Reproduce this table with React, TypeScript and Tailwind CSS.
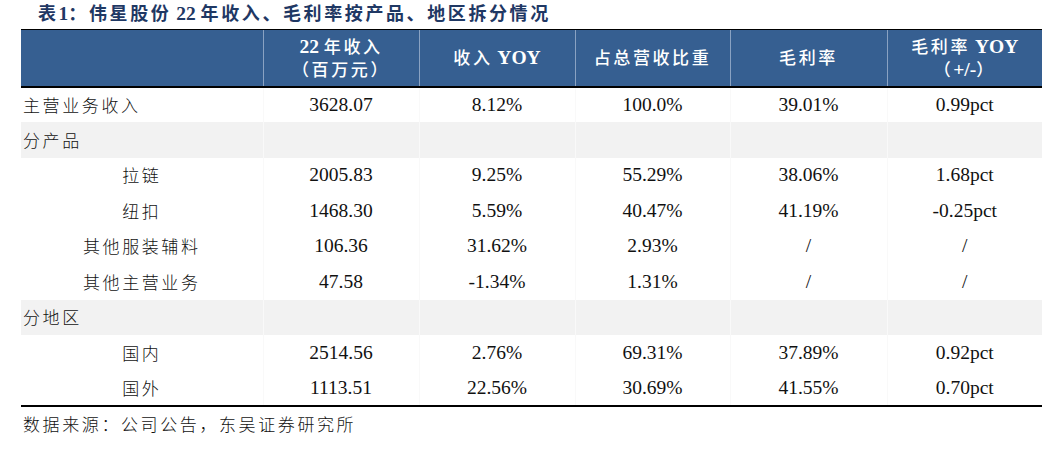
import React from 'react';

type Row = {
  label: string;
  kind: 'main' | 'group' | 'sub';
  vals?: string[];
};

const rows: Row[] = [
  { label: '主营业务收入', kind: 'main', vals: ['3628.07', '8.12%', '100.0%', '39.01%', '0.99pct'] },
  { label: '分产品', kind: 'group' },
  { label: '拉链', kind: 'sub', vals: ['2005.83', '9.25%', '55.29%', '38.06%', '1.68pct'] },
  { label: '纽扣', kind: 'sub', vals: ['1468.30', '5.59%', '40.47%', '41.19%', '-0.25pct'] },
  { label: '其他服装辅料', kind: 'sub', vals: ['106.36', '31.62%', '2.93%', '/', '/'] },
  { label: '其他主营业务', kind: 'sub', vals: ['47.58', '-1.34%', '1.31%', '/', '/'] },
  { label: '分地区', kind: 'group' },
  { label: '国内', kind: 'sub', vals: ['2514.56', '2.76%', '69.31%', '37.89%', '0.92pct'] },
  { label: '国外', kind: 'sub', vals: ['1113.51', '22.56%', '30.69%', '41.55%', '0.70pct'] },
];

const zh = "font-['Noto_Sans_CJK_SC',sans-serif] text-[17px] tracking-[2.6px]";
const num = "font-['Liberation_Serif',serif] text-[19.5px]";

const Zh: React.FC<{ children: React.ReactNode; className?: string }> = ({ children, className = '' }) => (
  <span className={`${zh} ${className}`}>{children}</span>
);

const Num: React.FC<{ children: React.ReactNode; className?: string }> = ({ children, className = '' }) => (
  <span className={`${num} ${className}`}>{children}</span>
);

const HeadCell: React.FC<{ children: React.ReactNode; first?: boolean }> = ({ children, first }) => (
  <th
    className={`bg-[#365f91] text-white text-center align-middle font-normal leading-[22px] border-t border-t-black border-b-2 border-b-black ${
      first ? '' : 'border-l border-l-[#8aa2c2]'
    }`}
  >
    {children}
  </th>
);

export default function App() {
  return (
    <div className="w-[1063px] h-[468px] bg-white pl-[21px] text-[#111]">
      <div className="h-[29px] pl-[17px] leading-[24px] text-[#1f3864] font-bold whitespace-nowrap">
        <Zh className="font-bold text-[18px] tracking-[1px]">表</Zh>
        <Num className="font-bold">1</Num>
        <Zh className="font-bold text-[18px] tracking-[1px]">：伟星股份</Zh>
        <Num className="font-bold"> 22 </Num>
        <Zh className="font-bold text-[18px] tracking-[1px]">年收入、毛利率按产品、地区拆分情况</Zh>
      </div>

      <table className="table-fixed border-collapse w-[1021px]">
        <colgroup>
          <col className="w-[242px]" />
          <col className="w-[156px]" />
          <col className="w-[156px]" />
          <col className="w-[155px]" />
          <col className="w-[157px]" />
          <col className="w-[155px]" />
        </colgroup>
        <thead>
          <tr className="h-[57px]">
            <HeadCell first>{''}</HeadCell>
            <HeadCell>
              <div>
                <Num className="font-bold">22 </Num>
                <Zh className="font-medium">年收入</Zh>
              </div>
              <div>
                <Zh className="font-medium">（百万元）</Zh>
              </div>
            </HeadCell>
            <HeadCell>
              <Zh className="font-medium">收入</Zh>
              <Num className="font-bold"> YOY</Num>
            </HeadCell>
            <HeadCell>
              <Zh className="font-medium">占总营收比重</Zh>
            </HeadCell>
            <HeadCell>
              <Zh className="font-medium">毛利率</Zh>
            </HeadCell>
            <HeadCell>
              <div>
                <Zh className="font-medium">毛利率</Zh>
                <Num className="font-bold"> YOY</Num>
              </div>
              <div>
                <Zh className="font-medium tracking-[0px]">（</Zh>
                <Num className="font-bold text-[17px]">+/-</Num>
                <Zh className="font-medium tracking-[0px]">）</Zh>
              </div>
            </HeadCell>
          </tr>
        </thead>
        <tbody>
          {rows.map((r, i) => {
            const grey = r.kind === 'group';
            const last = i === rows.length - 1;
            const h = i % 2 === 0 ? 'h-[35px]' : 'h-[36px]';
            return (
              <tr key={r.label} className={`${h} ${grey ? 'bg-[#f2f2f2]' : 'bg-white'}`}>
                <td
                  className={`align-middle leading-none ${
                    r.kind === 'sub' ? 'text-center' : 'text-left pl-[2px]'
                  } ${last ? 'border-b-2 border-b-black' : ''}`}
                >
                  <Zh className="font-light">{r.label}</Zh>
                </td>
                {[0, 1, 2, 3, 4].map((j) => (
                  <td
                    key={j}
                    className={`text-center align-middle leading-none border-l border-l-[#f9f9f9] ${
                      last ? 'border-b-2 border-b-black' : ''
                    }`}
                  >
                    {r.vals ? <Num>{r.vals[j]}</Num> : null}
                  </td>
                ))}
              </tr>
            );
          })}
        </tbody>
      </table>

      <div className="mt-[5px] pl-[2px] leading-[24px]">
        <Zh className="font-light">数据来源：公司公告，东吴证券研究所</Zh>
      </div>
    </div>
  );
}
